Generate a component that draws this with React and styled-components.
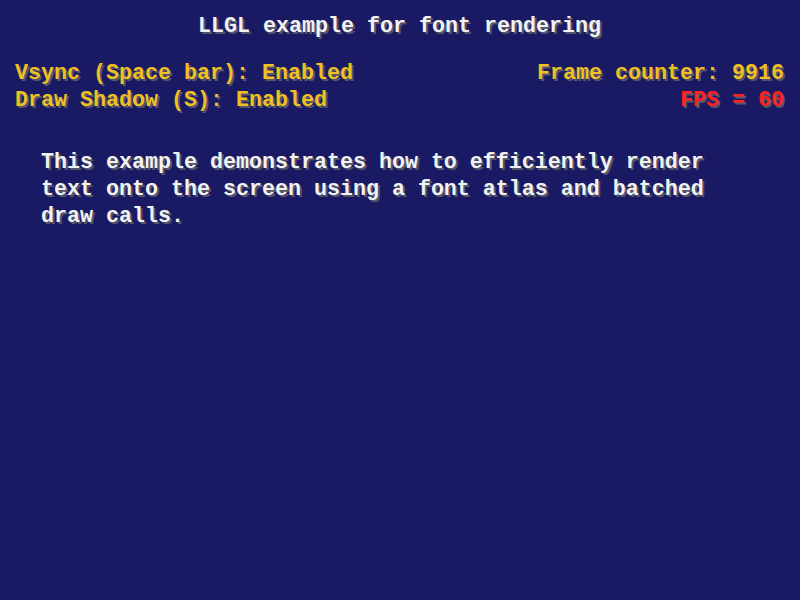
import React from "react";
import styled, { createGlobalStyle } from "styled-components";

const GlobalStyle = createGlobalStyle`
	html, body {
		margin: 0;
		padding: 0;
		background: #1a1a64;
	}
`;

const Screen = styled.div`
	width: 800px;
	height: 600px;
	box-sizing: border-box;
	padding: 13px 16px 0 15px;
	background-color: #1a1a64;
	font-family: "Courier New", "Liberation Mono", monospace;
	font-weight: bold;
	font-size: 21.67px;
	line-height: 27px;
	text-shadow: 2px 2px 0 #55556a;
	overflow: hidden;
`;

const Title = styled.div`
	text-align: center;
	color: #f2f2f2;
	white-space: pre;
`;

const StatusBar = styled.div`
	display: flex;
	justify-content: space-between;
	margin-top: 20px;
`;

const Column = styled.div`
	display: flex;
	flex-direction: column;
	align-items: ${(p) => (p.$right ? "flex-end" : "flex-start")};
`;

const Line = styled.div`
	white-space: pre;
	color: ${(p) => p.$color || "#f0c020"};
`;

const Paragraph = styled.p`
	margin: 35px 0 0 26px;
	width: 700px;
	color: #f2f2f2;
`;

const App = () => {
	return (
		<Screen>
			<GlobalStyle />
			<Title>LLGL example for font rendering</Title>
			<StatusBar>
				<Column>
					<Line>Vsync (Space bar): Enabled</Line>
					<Line>Draw Shadow (S): Enabled</Line>
				</Column>
				<Column $right>
					<Line>Frame counter: 9916</Line>
					<Line $color="#ff2020">FPS = 60</Line>
				</Column>
			</StatusBar>
			<Paragraph>
				This example demonstrates how to efficiently render text onto the
				screen using a font atlas and batched draw calls.
			</Paragraph>
		</Screen>
	);
};

export default App;
